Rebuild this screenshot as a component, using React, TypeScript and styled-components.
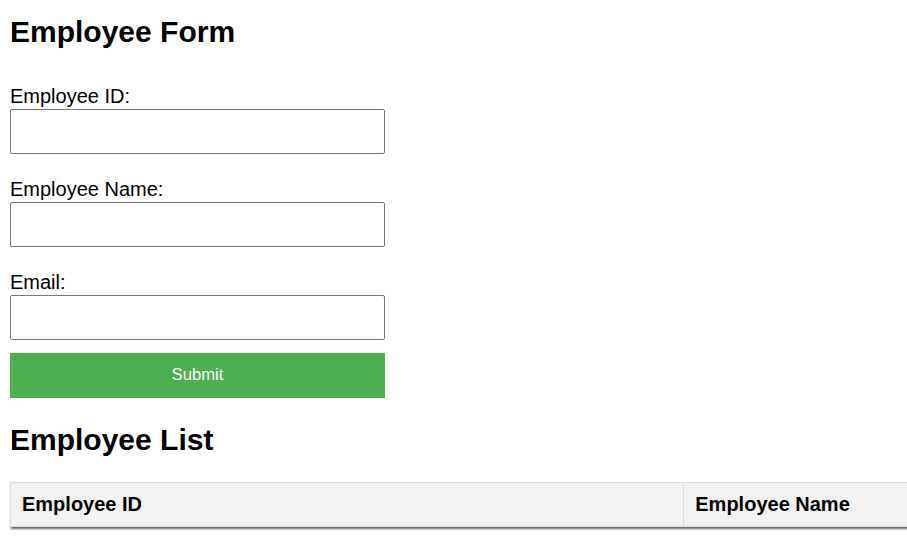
import React from "react";
import styled, { createGlobalStyle } from "styled-components";

const Global = createGlobalStyle`
  html, body { overflow: hidden; }
  body {
    margin: 0;
    background: #ffffff;
    color: #000000;
    font-family: "Liberation Sans", Arial, sans-serif;
  }
  * { box-sizing: border-box; }
`;

const Page = styled.div`
  padding: 0 10px 20px;
`;

const Heading = styled.h2<{ $top: number }>`
  margin: ${(p) => p.$top}px 0 0;
  font-size: 30px;
  line-height: 34px;
  font-weight: 700;
`;

const Form = styled.form`
  margin-top: 36px;
  width: 375px;
  display: flex;
  flex-direction: column;
`;

const Field = styled.div<{ $last?: boolean }>`
  display: flex;
  flex-direction: column;
  margin-bottom: ${(p) => (p.$last ? 13 : 24)}px;
`;

const Label = styled.label`
  font-size: 20px;
  line-height: 23px;
  margin-bottom: 1px;
`;

const Input = styled.input`
  width: 375px;
  height: 45px;
  border: 1px solid #767676;
  border-radius: 2px;
  padding: 0 8px;
  font-size: 20px;
  font-family: inherit;
  background: #fff;
`;

const Submit = styled.button`
  width: 375px;
  height: 45px;
  border: none;
  background: #4caf50;
  color: #ffffff;
  font-family: "Liberation Sans", Arial, sans-serif;
  font-size: 16.67px;
  padding: 0 0 1px;
  cursor: pointer;
`;

const TableWrap = styled.div`
  margin-top: 25px;
  width: 1000px;
  box-shadow: 1px 2px 2px rgba(0, 0, 0, 0.6);
`;

const Table = styled.table`
  border-collapse: collapse;
  width: 100%;
`;

const Th = styled.th<{ $w: number }>`
  width: ${(p) => p.$w}px;
  text-align: left;
  background: #f2f2f2;
  border: 1px solid #dddddd;
  padding: 10px 11px;
  font-size: 20px;
  line-height: 23px;
  font-weight: 700;
`;

export default function App() {
  return (
    <>
      <Global />
      <Page>
        <Heading $top={15}>Employee Form</Heading>
        <Form onSubmit={(e) => e.preventDefault()}>
          <Field>
            <Label htmlFor="eid">Employee ID:</Label>
            <Input id="eid" type="text" />
          </Field>
          <Field>
            <Label htmlFor="ename">Employee Name:</Label>
            <Input id="ename" type="text" />
          </Field>
          <Field $last>
            <Label htmlFor="email">Email:</Label>
            <Input id="email" type="email" />
          </Field>
          <Submit type="submit">Submit</Submit>
        </Form>
        <Heading $top={25}>Employee List</Heading>
        <TableWrap>
          <Table>
            <thead>
              <tr>
                <Th $w={674}>Employee ID</Th>
                <Th $w={326}>Employee Name</Th>
              </tr>
            </thead>
          </Table>
        </TableWrap>
      </Page>
    </>
  );
}
